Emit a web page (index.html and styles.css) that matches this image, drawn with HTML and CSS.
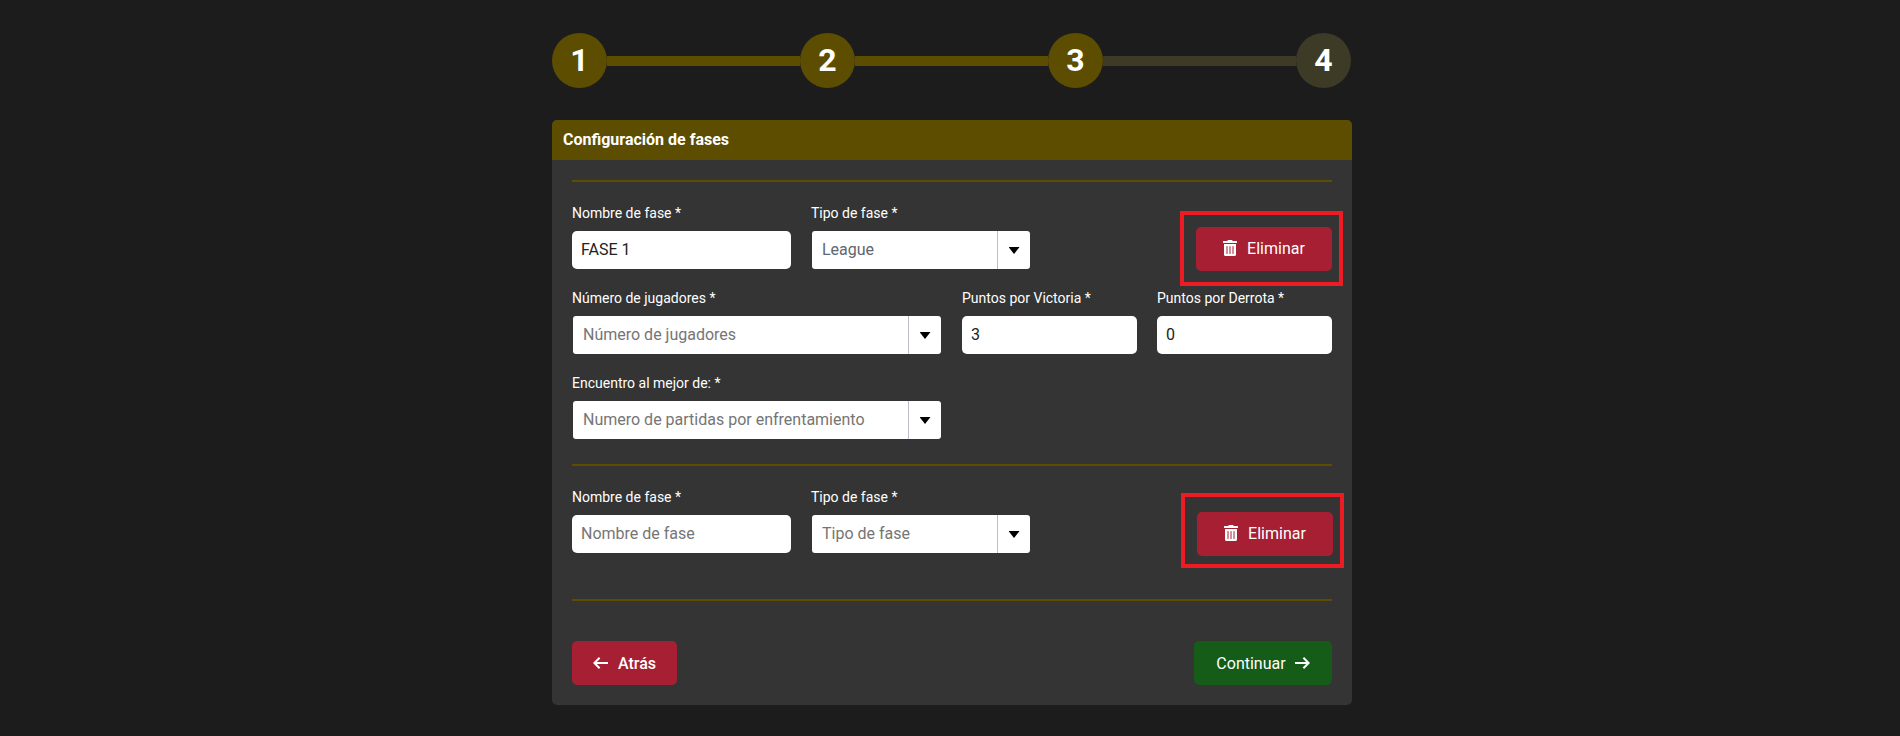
FILE: index.html
```html
<!DOCTYPE html>
<html lang="es">
<head>
<meta charset="UTF-8">
<title>Configuración de fases</title>
<link rel="stylesheet" href="styles.css">
</head>
<body>
<div class="wizard">
  <div class="steps">
    <div class="step done">1</div>
    <div class="step-line done"></div>
    <div class="step done">2</div>
    <div class="step-line done"></div>
    <div class="step done">3</div>
    <div class="step-line"></div>
    <div class="step">4</div>
  </div>

  <div class="card">
    <div class="card-header">Configuración de fases</div>
    <div class="card-body">
      <hr class="divider">

      <div class="phase">
        <div class="row">
          <div class="field field-name">
            <label>Nombre de fase *</label>
            <div class="input">FASE 1</div>
          </div>
          <div class="field field-name">
            <label>Tipo de fase *</label>
            <div class="select"><span class="select-value muted-dark">League</span><span class="select-arrow"><span class="caret"></span></span></div>
          </div>
          <div class="delete-wrap">
            <button type="button" class="btn btn-red btn-delete">
              <svg class="icon-trash" viewBox="0 0 448 512"><path fill="currentColor" d="M32 464a48 48 0 0 0 48 48h288a48 48 0 0 0 48-48V128H32zm272-256a16 16 0 0 1 32 0v224a16 16 0 0 1-32 0zm-96 0a16 16 0 0 1 32 0v224a16 16 0 0 1-32 0zm-96 0a16 16 0 0 1 32 0v224a16 16 0 0 1-32 0zM432 32H312l-9.4-18.7A24 24 0 0 0 281.1 0H166.8a23.72 23.72 0 0 0-21.4 13.3L136 32H16A16 16 0 0 0 0 48v32a16 16 0 0 0 16 16h416a16 16 0 0 0 16-16V48a16 16 0 0 0-16-16z"/></svg>
              Eliminar
            </button>
          </div>
        </div>
        <div class="row">
          <div class="field field-wide">
            <label>Número de jugadores *</label>
            <div class="select"><span class="select-value muted">Número de jugadores</span><span class="select-arrow"><span class="caret"></span></span></div>
          </div>
          <div class="field field-small">
            <label>Puntos por Victoria *</label>
            <div class="input">3</div>
          </div>
          <div class="field field-small">
            <label>Puntos por Derrota *</label>
            <div class="input">0</div>
          </div>
        </div>
        <div class="row">
          <div class="field field-wide">
            <label>Encuentro al mejor de: *</label>
            <div class="select select-flush"><span class="select-value muted">Numero de partidas por enfrentamiento</span><span class="select-arrow"><span class="caret"></span></span></div>
          </div>
        </div>
      </div>

      <hr class="divider">

      <div class="phase phase-last">
        <div class="row">
          <div class="field field-name">
            <label>Nombre de fase *</label>
            <div class="input muted">Nombre de fase</div>
          </div>
          <div class="field field-name">
            <label>Tipo de fase *</label>
            <div class="select"><span class="select-value muted">Tipo de fase</span><span class="select-arrow"><span class="caret"></span></span></div>
          </div>
          <div class="delete-wrap second">
            <button type="button" class="btn btn-red btn-delete">
              <svg class="icon-trash" viewBox="0 0 448 512"><path fill="currentColor" d="M32 464a48 48 0 0 0 48 48h288a48 48 0 0 0 48-48V128H32zm272-256a16 16 0 0 1 32 0v224a16 16 0 0 1-32 0zm-96 0a16 16 0 0 1 32 0v224a16 16 0 0 1-32 0zm-96 0a16 16 0 0 1 32 0v224a16 16 0 0 1-32 0zM432 32H312l-9.4-18.7A24 24 0 0 0 281.1 0H166.8a23.72 23.72 0 0 0-21.4 13.3L136 32H16A16 16 0 0 0 0 48v32a16 16 0 0 0 16 16h416a16 16 0 0 0 16-16V48a16 16 0 0 0-16-16z"/></svg>
              Eliminar
            </button>
          </div>
        </div>
      </div>

      <hr class="divider">

      <div class="actions">
        <button type="button" class="btn btn-red btn-back">
          <svg class="icon-arrow" viewBox="0 0 15 12"><path d="M15 6H1.6M6.6.7L1.4 6l5.2 5.3" fill="none" stroke="currentColor" stroke-width="2"/></svg>
          Atrás
        </button>
        <button type="button" class="btn btn-green btn-next">
          Continuar
          <svg class="icon-arrow" viewBox="0 0 15 12"><path d="M0 6h13.4M8.4.7l5.2 5.3-5.2 5.3" fill="none" stroke="currentColor" stroke-width="2"/></svg>
        </button>
      </div>
    </div>
  </div>
</div>
</body>
</html>
```

FILE: styles.css
```css
* {
  box-sizing: border-box;
}

html {
  height: 736px;
  overflow: hidden;
}

body {
  margin: 0;
  height: 736px;
  overflow: hidden;
  background: #1c1c1c;
  font-family: Roboto, "Liberation Sans", sans-serif;
}

.wizard {
  width: 800px;
  margin-left: 552px;
  padding-top: 33px;
}

/* steps */
.steps {
  display: flex;
  align-items: center;
  padding-right: 1px;
  margin-bottom: 32px;
}

.step {
  width: 55px;
  height: 55px;
  flex: none;
  border-radius: 50%;
  background: #3d3a26;
  color: #fff;
  font-size: 32px;
  font-weight: 700;
  line-height: 55px;
  text-align: center;
}

.step.done {
  background: #5d4d00;
}

.step-line {
  flex: 1;
  height: 10px;
  background: #3d3a26;
}

.step-line.done {
  background: #5d4d00;
}

/* card */
.card {
  height: 585px;
  border-radius: 5px;
  background: #343434;
  overflow: hidden;
}

.card-header {
  height: 40px;
  padding-left: 11px;
  background: #5d4d00;
  color: #fff;
  font-size: 16px;
  font-weight: 700;
  line-height: 39px;
}

.card-body {
  padding: 20px 20px 20px;
}

.divider {
  height: 2px;
  margin: 0;
  border: 0;
  background: #5d4d00;
}

.phase {
  padding: 21px 0 25px;
}

.phase-last {
  padding-bottom: 46px;
}

.row {
  display: flex;
  gap: 20px;
  margin-bottom: 19px;
}

.row:last-child {
  margin-bottom: 0;
}

.field label {
  display: block;
  height: 20px;
  margin-bottom: 8px;
  color: #fff;
  font-size: 14px;
  font-weight: 400;
  line-height: 20px;
}

.field-name {
  width: 219px;
}

.field-wide {
  width: 370px;
}

.field-small {
  width: 175px;
}

.input {
  height: 38px;
  padding-left: 9px;
  border-radius: 5px;
  background: #fff;
  color: #222;
  font-size: 16px;
  line-height: 38px;
}

.select {
  display: flex;
  height: 38px;
  margin: 1px 0 -1px 1px;
  border-radius: 3px;
  background: #fff;
  font-size: 16px;
}

.field-wide .select {
  margin-right: 1px;
}

.field-wide .select-flush {
  margin-top: 0;
  margin-bottom: 0;
}

.select-value {
  flex: 1;
  padding-left: 10px;
  line-height: 38px;
}

.muted {
  color: #757575;
}

.muted-dark {
  color: #5f6670;
}

.select-arrow {
  display: flex;
  width: 33px;
  align-items: center;
  justify-content: center;
  border-left: 1px solid #bcbccb;
}

.caret {
  width: 11px;
  height: 7px;
  margin-top: 1px;
  background: #000;
  clip-path: polygon(0 0, 100% 0, 50% 100%);
}

/* buttons */
.btn {
  display: inline-flex;
  height: 44px;
  align-items: center;
  justify-content: center;
  border: 0;
  border-radius: 5px;
  color: #fff;
  font-family: inherit;
  font-size: 16px;
  padding: 0;
}

.btn-red {
  background: #a71f33;
}

.btn-green {
  background: #145c17;
}

.delete-wrap {
  position: relative;
  height: 44px;
  margin: 24px 0 -4px auto;
}

.delete-wrap::after {
  content: "";
  position: absolute;
  top: -16px;
  right: -11px;
  bottom: -15px;
  left: -16px;
  border: 4px solid #ed1c24;
}

.delete-wrap.second {
  margin: 25px -1px -6px auto;
}

.delete-wrap.second::after {
  top: -19px;
  bottom: -12px;
}

.btn-delete {
  width: 136px;
  gap: 10px;
  padding-bottom: 2px;
}

.icon-trash {
  width: 14px;
  height: 16px;
}

.icon-arrow {
  width: 15px;
  height: 12px;
}

.actions {
  display: flex;
  justify-content: space-between;
  padding-top: 40px;
}

.btn-back {
  width: 105px;
  gap: 10px;
  font-weight: 500;
}

.btn-next {
  width: 138px;
  gap: 9px;
}
```
